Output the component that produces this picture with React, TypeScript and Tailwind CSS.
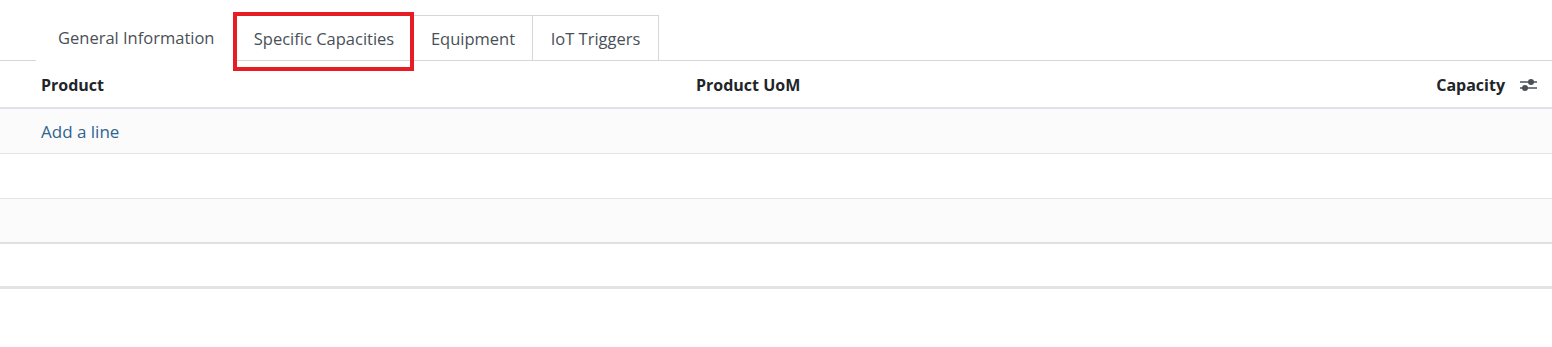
import React from "react";

function SlidersIcon() {
  return (
    <svg width="20" height="16" viewBox="0 0 20 16" className="block">
      <line x1="1" y1="5" x2="18" y2="5" stroke="#495057" strokeWidth="1.5" />
      <line x1="1" y1="11" x2="18" y2="11" stroke="#495057" strokeWidth="1.5" />
      <circle cx="12" cy="5" r="3" fill="#495057" />
      <circle cx="6" cy="11" r="3" fill="#495057" />
    </svg>
  );
}

export default function App() {
  return (
    <div
      className="w-[1552px] h-[347px] bg-white text-[#212529] overflow-hidden"
      style={{ fontFamily: '"Open Sans", "Noto Sans", sans-serif' }}
    >
      {/* Tabs */}
      <div className="flex pt-[15px] text-[16.5px] text-[#495057]">
        <div className="w-[36px] border-b border-[#d4d6da]" />
        <div className="w-[198px] h-[46px] flex items-center pl-[22px] pt-[2px] border-b border-transparent">
          General Information
        </div>
        <div className="relative w-[179px] h-[46px] flex items-center justify-center pt-[2px] border border-[#d4d6da] border-r-0">
          Specific Capacities
          <div className="absolute left-[-2px] top-[-4px] w-[181px] h-[59px] border-4 border-[#e81c24]" />
        </div>
        <div className="w-[119px] h-[46px] flex items-center justify-center pt-[2px] border border-[#d4d6da] border-r-0">
          Equipment
        </div>
        <div className="w-[127px] h-[46px] flex items-center justify-center pt-[2px] border border-[#d4d6da]">
          IoT Triggers
        </div>
        <div className="flex-1 border-b border-[#d4d6da]" />
      </div>

      {/* Table */}
      <div className="text-[16.5px]">
        <div className="h-[48px] flex items-center pt-[1px] border-b-2 border-[#dee2e6] font-bold text-[16px]">
          <div className="w-[696px] pl-[41px]">Product</div>
          <div className="flex-1">Product UoM</div>
          <div className="flex items-center gap-[14px] pr-[13px]">
            <span>Capacity</span>
            <SlidersIcon />
          </div>
        </div>
        <div className="h-[45px] flex items-center pt-[1px] bg-[#fbfbfb] border-b border-[#e3e4e6] pl-[41px] text-[#30648f] text-[17px]">
          Add a line
        </div>
        <div className="h-[45px] bg-white border-b border-[#e3e4e6]" />
        <div className="h-[45px] bg-[#fbfbfb] border-b-2 border-[#dfe0e3]" />
        <div className="h-[45px] bg-white border-b-[3px] border-[#e2e3e5]" />
      </div>
    </div>
  );
}
